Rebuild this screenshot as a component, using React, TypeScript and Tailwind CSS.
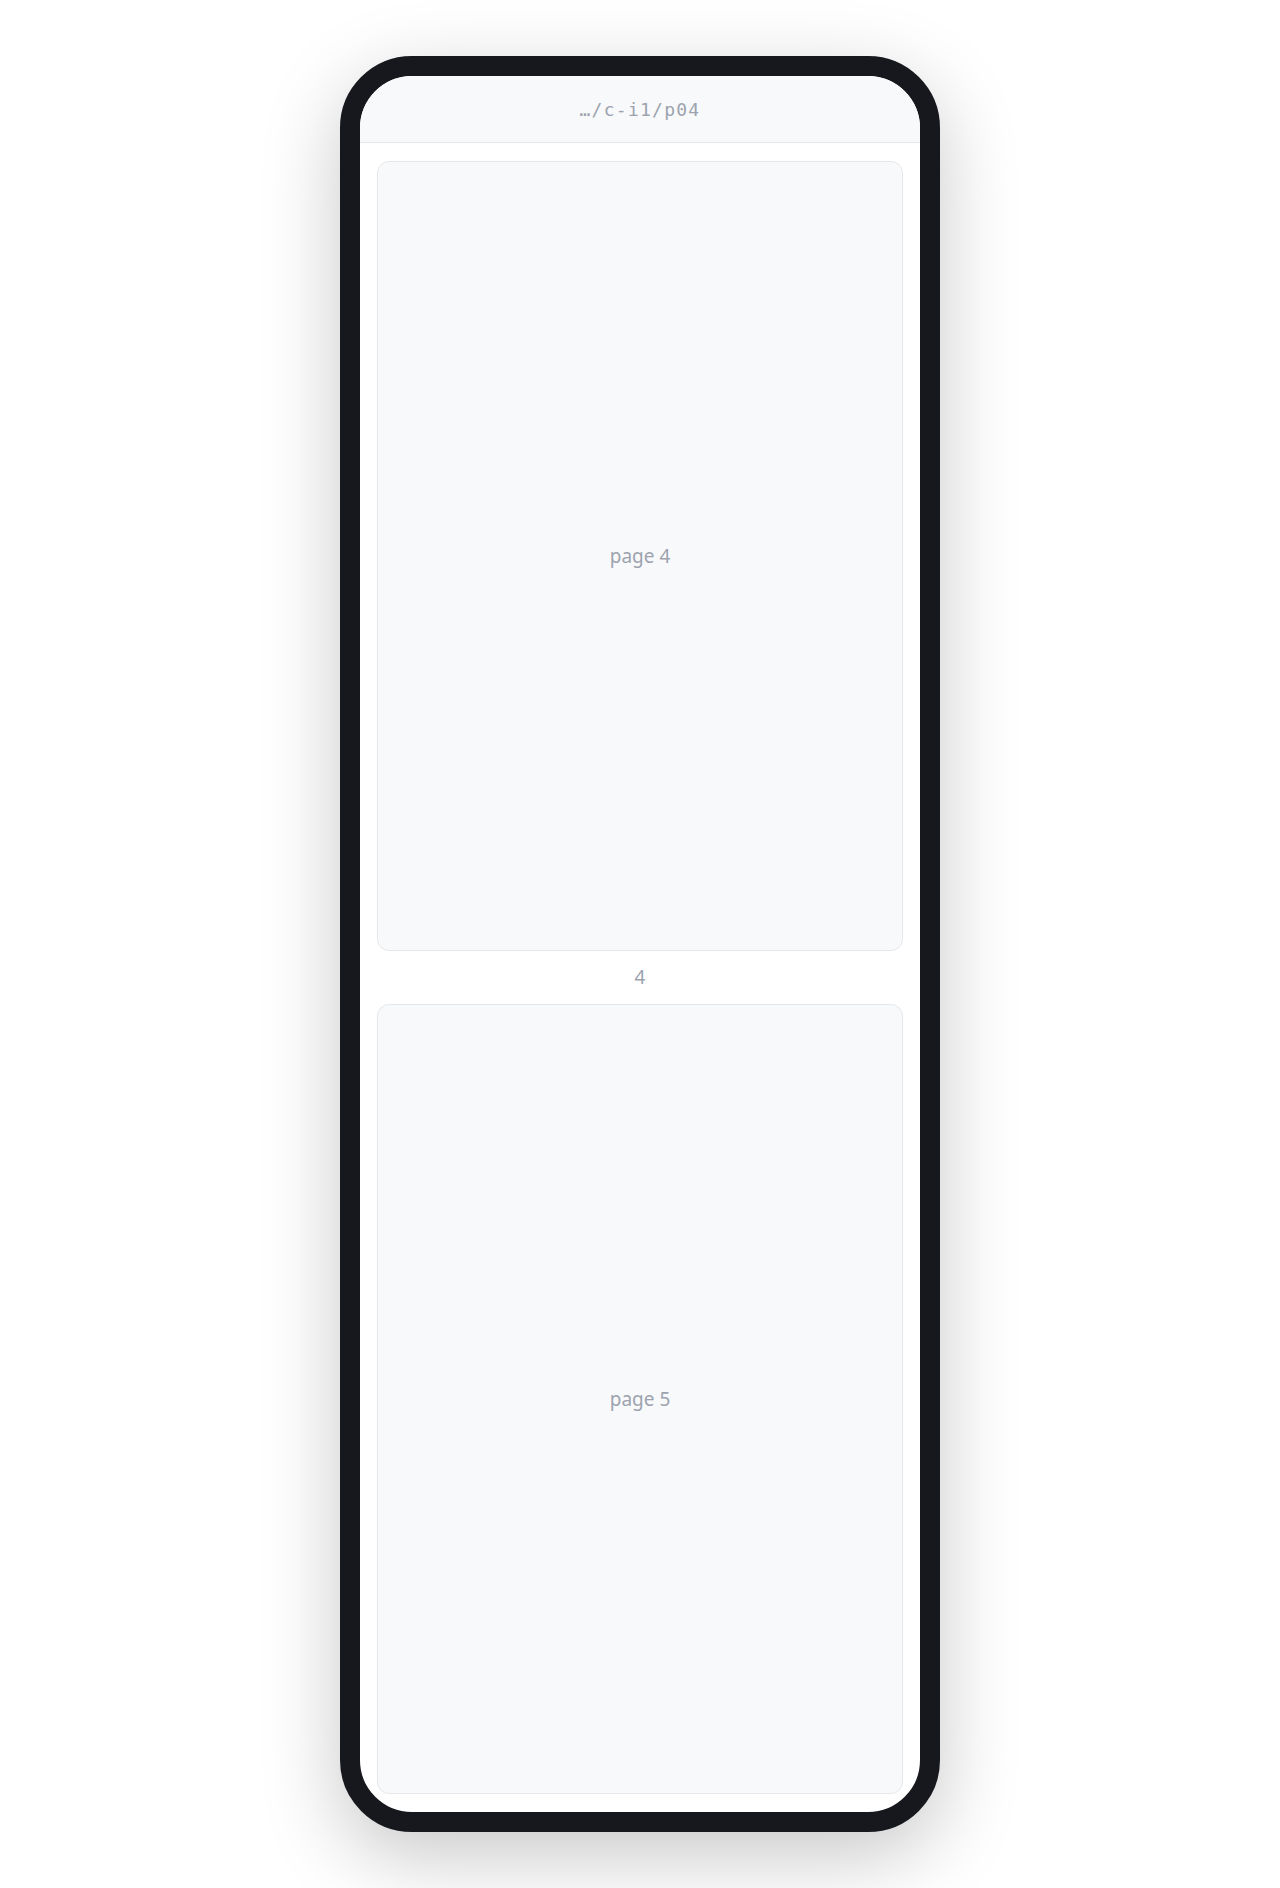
import React from "react";

const pages = [4, 5];

function PageCard({ n }: { n: number }) {
  return (
    <div className="flex flex-col">
      <div className="h-[790px] rounded-xl border border-[#e5e7eb] bg-[#f8f9fa] flex items-center justify-center">
        <span className="text-[19px] text-[#9ca3af]">page {n}</span>
      </div>
      <div className="h-[53px] pb-[1px] flex items-center justify-center text-[19px] leading-none text-[#9ca3af]">
        {n}
      </div>
    </div>
  );
}

export default function App() {
  return (
    <div
      className="min-h-screen bg-white flex items-center justify-center"
      style={{ fontFamily: '"Noto Sans", "Open Sans", sans-serif' }}
    >
      <div className="w-[600px] h-[1776px] rounded-[72px] border-[20px] border-[#16181d] bg-white overflow-hidden shadow-[0_24px_80px_rgba(0,0,0,0.22)] flex flex-col">
        <header className="h-[67px] shrink-0 border-b border-[#e5e7eb] bg-[#f8f9fa] flex items-center justify-center">
          <span
            className="text-[18px] font-medium tracking-[0.07em] text-[#9ca3af]"
            style={{ fontFamily: '"DejaVu Sans Mono", monospace' }}
          >
            …/c-i1/p04
          </span>
        </header>
        <main className="flex-1 overflow-hidden px-[17px] pt-[18px]">
          {pages.map((n) => (
            <PageCard key={n} n={n} />
          ))}
        </main>
      </div>
    </div>
  );
}
